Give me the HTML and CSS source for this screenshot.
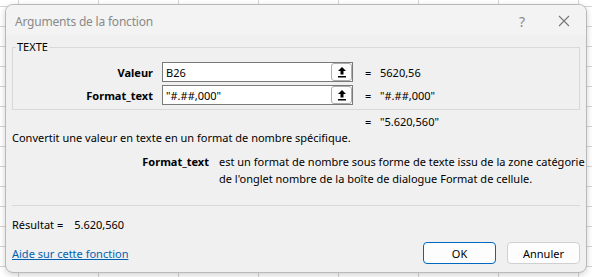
FILE: index.html
```html
<!DOCTYPE html>
<html lang="fr">
<head>
    <meta charset="UTF-8">
    <title>Arguments de la fonction</title>
    <link rel="stylesheet" href="styles.css">
</head>
<body>
    <div class="dialog">
        <div class="titlebar">
            <span class="title">Arguments de la fonction</span>
            <span class="help">?</span>
            <svg class="close" width="12" height="12" viewBox="0 0 12 12">
                <path d="M1 1L11 11M11 1L1 11" stroke="#777" stroke-width="1.1" fill="none"/>
            </svg>
        </div>

        <div class="body">
            <fieldset class="group">
                <legend>TEXTE</legend>
                <div class="arg">
                    <label>Valeur</label>
                    <div class="field">
                        <span class="field-text">B26</span>
                        <span class="pick"><svg width="10" height="12" viewBox="0 0 10 12"><path d="M5 1L1 5H3.5V8.5H6.5V5H9Z" fill="#000"/><rect x="1" y="10" width="8" height="1.5" fill="#000"/></svg></span>
                    </div>
                    <span class="eq">=</span>
                    <span class="val">5620,56</span>
                </div>
                <div class="arg">
                    <label>Format_text</label>
                    <div class="field">
                        <span class="field-text">"#.##,000"</span>
                        <span class="pick"><svg width="10" height="12" viewBox="0 0 10 12"><path d="M5 1L1 5H3.5V8.5H6.5V5H9Z" fill="#000"/><rect x="1" y="10" width="8" height="1.5" fill="#000"/></svg></span>
                    </div>
                    <span class="eq">=</span>
                    <span class="val">"#.##,000"</span>
                </div>
            </fieldset>

            <div class="result-line">
                <span class="eq">=</span>
                <span class="val">"5.620,560"</span>
            </div>

            <p class="desc">Convertit une valeur en texte en un format de nombre spécifique.</p>

            <div class="arg-help">
                <b>Format_text</b>
                <span>est un format de nombre sous forme de texte issu de la zone catégorie<br>de l'onglet nombre de la boîte de dialogue Format de cellule.</span>
            </div>

            <hr class="sep">

            <div class="result">Résultat =<span class="result-val">5.620,560</span></div>

            <div class="footer">
                <a class="help-link" href="#">Aide sur cette fonction</a>
                <div class="buttons">
                    <button class="btn btn-ok">OK</button>
                    <button class="btn">Annuler</button>
                </div>
            </div>
        </div>
    </div>
</body>
</html>
```

FILE: styles.css
```css
body {
    margin: 0;
    height: 277px;
    overflow: hidden;
    font-family: "Noto Sans", sans-serif;
    font-size: 11px;
    color: #000;
    background-color: #fff;
    background-image:
        linear-gradient(to right, #d4d4d4 1px, transparent 1px),
        linear-gradient(to bottom, #d4d4d4 1px, transparent 1px);
    background-size: 80px 100%, 100% 20px;
    background-position: 18px 0, 0 6px;
}
.dialog {
    position: absolute;
    left: 5px;
    top: 4px;
    width: 580px;
    height: 267px;
    background: #f0f0f0;
    border: 1px solid #b9b9b9;
    border-radius: 8px;
    box-shadow: 0 2px 6px rgba(0, 0, 0, 0.18);
    overflow: hidden;
}
.titlebar {
    height: 30px;
    display: flex;
    align-items: center;
    background: #f3f3f3;
    padding: 0 16px 0 9px;
}
.title {
    flex: 1;
    font-size: 12px;
    letter-spacing: -0.2px;
    color: #8a8a8a;
    padding-top: 2px;
}
.help {
    color: #8a8a8a;
    font-size: 14px;
    margin-right: 33px;
    padding-top: 2px;
}
.close {
    margin-top: 2px;
}
.body {
    padding: 0 6px;
}
.group {
    margin: 5px 0 0;
    padding: 8px 0 4px;
    border: 1px solid #d9d9d9;
    border-radius: 0;
}
.group legend {
    padding: 0 1px;
    margin-left: 3px;
    font-size: 11px;
    line-height: 14px;
}
.arg {
    display: flex;
    align-items: center;
    height: 20px;
}
.arg + .arg {
    margin-top: 3px;
}
.arg label {
    width: 140px;
    text-align: right;
    font-weight: bold;
    padding-right: 9px;
}
.field {
    width: 191px;
    height: 20px;
    display: flex;
    align-items: center;
    background: #fff;
    border: 1px solid #7a7a7a;
    box-sizing: border-box;
}
.field-text {
    flex: 1;
    padding-left: 3px;
}
.pick {
    width: 21px;
    height: 18px;
    box-sizing: border-box;
    border: 1px solid #adadad;
    border-radius: 3px;
    background: #fdfdfd;
    display: flex;
    align-items: center;
    justify-content: center;
}
.eq {
    margin-left: 12px;
    width: 15px;
}
.result-line {
    display: flex;
    height: 20px;
    align-items: center;
    padding-left: 341px;
    margin-top: 1px;
}
.desc {
    margin: 0 0 8px;
    line-height: 14px;
}
.arg-help {
    display: flex;
    line-height: 17px;
}
.arg-help b {
    width: 197px;
    text-align: right;
    padding-right: 10px;
    flex-shrink: 0;
}
.arg-help span {
    white-space: nowrap;
}
.sep {
    border: 0;
    border-top: 1px solid #d9d9d9;
    margin: 18px 0 0;
}
.result {
    margin-top: 11px;
    line-height: 16px;
}
.result-val {
    margin-left: 11px;
}
.footer {
    display: flex;
    align-items: center;
    justify-content: space-between;
    margin-top: 9px;
}
.help-link {
    color: #0063b1;
    text-decoration: underline;
}
.buttons {
    display: flex;
    gap: 11px;
}
.btn {
    width: 73px;
    height: 22px;
    font-family: "Noto Sans", sans-serif;
    font-size: 11px;
    color: #000;
    background: #fdfdfd;
    border: 1px solid #d0d0d0;
    border-radius: 4px;
}
.btn-ok {
    border: 1px solid #0067c0;
}
```
